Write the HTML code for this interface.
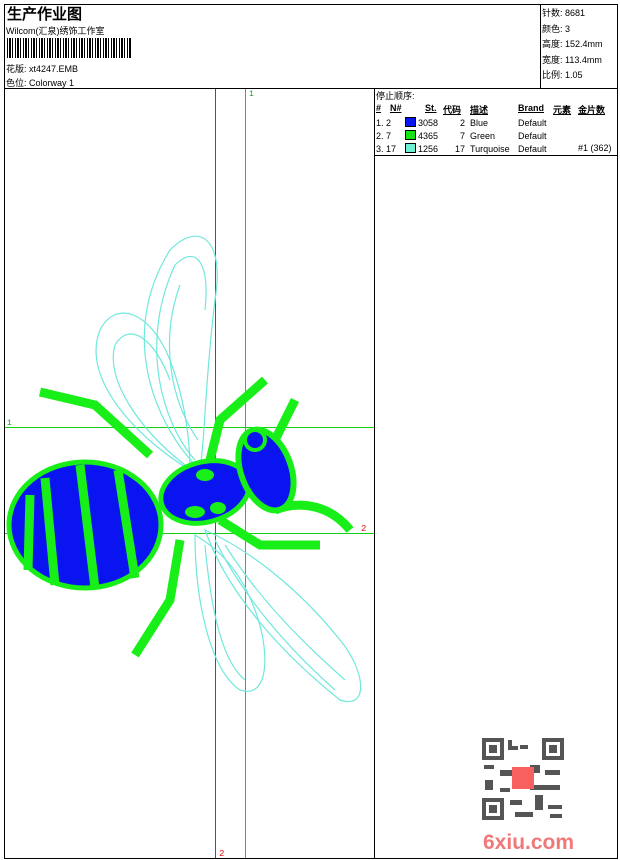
<!DOCTYPE html>
<html><head><meta charset="utf-8"><style>
body{margin:0;width:620px;height:860px;background:#fff;position:relative;font-family:"Liberation Sans","WenQuanYi Zen Hei",sans-serif;overflow:hidden}
.a{position:absolute;font-size:9px;color:#000;white-space:nowrap}
.l{position:absolute;background:#000}
</style></head><body>
<div class="l" style="left:4px;top:4px;width:614px;height:1px"></div>
<div class="l" style="left:4px;top:858px;width:614px;height:1px"></div>
<div class="l" style="left:4px;top:4px;width:1px;height:855px"></div>
<div class="l" style="left:617px;top:4px;width:1px;height:855px"></div>
<div class="l" style="left:4px;top:88px;width:614px;height:1px"></div>
<div class="l" style="left:540px;top:4px;width:1px;height:84px"></div>
<div class="l" style="left:374px;top:88px;width:1px;height:771px"></div>
<div class="l" style="left:374px;top:155px;width:244px;height:1px"></div>
<div class="a" style="left:7px;top:3px;font-size:15px;font-weight:bold">生产作业图</div>
<div class="a" style="left:6px;top:24px">Wilcom(汇泉)绣饰工作室</div>
<div style="position:absolute;left:7px;top:38px;width:124px;height:20px;background:repeating-linear-gradient(90deg,#000 0 1px,#fff 1px 2px,#000 2px 4px,#fff 4px 5px,#000 5px 6px,#fff 6px 8px)"></div>
<div class="a" style="left:6px;top:62px">花版: xt4247.EMB</div>
<div class="a" style="left:6px;top:76px">色位: Colorway 1</div>
<div class="a" style="left:542px;top:6px;line-height:15.5px">针数: 8681<br>颜色: 3<br>高度: 152.4mm<br>宽度: 113.4mm<br>比例: 1.05</div>
<div class="a" style="left:376px;top:89px">停止顺序:</div>
<div class="a" style="left:376px;top:103px;font-weight:bold;text-decoration:underline">#</div>
<div class="a" style="left:390px;top:103px;font-weight:bold;text-decoration:underline">N#</div>
<div class="a" style="left:425px;top:103px;font-weight:bold;text-decoration:underline">St.</div>
<div class="a" style="left:443px;top:103px;font-weight:bold;text-decoration:underline">代码</div>
<div class="a" style="left:470px;top:103px;font-weight:bold;text-decoration:underline">描述</div>
<div class="a" style="left:518px;top:103px;font-weight:bold;text-decoration:underline">Brand</div>
<div class="a" style="left:553px;top:103px;font-weight:bold;text-decoration:underline">元素</div>
<div class="a" style="left:578px;top:103px;font-weight:bold;text-decoration:underline">金片数</div>
<div class="a" style="left:376px;top:117px;line-height:13px">1. 2<br>2. 7<br>3. 17</div>
<div style="position:absolute;left:405px;top:117px;width:9px;height:8px;background:#0a14f0;border:1px solid #000"></div>
<div style="position:absolute;left:405px;top:130px;width:9px;height:8px;background:#14e614;border:1px solid #000"></div>
<div style="position:absolute;left:405px;top:143px;width:9px;height:8px;background:#6ef0d2;border:1px solid #000"></div>
<div class="a" style="left:418px;top:117px;line-height:13px">3058<br>4365<br>1256</div>
<div class="a" style="left:452px;top:117px;line-height:13px;text-align:right;width:13px">2<br>7<br>17</div>
<div class="a" style="left:470px;top:117px;line-height:13px">Blue<br>Green<br>Turquoise</div>
<div class="a" style="left:518px;top:117px;line-height:13px">Default<br>Default<br>Default</div>
<div class="a" style="left:578px;top:143px">#1 (362)</div>
<svg style="position:absolute;left:0;top:0" width="620" height="860">
<g shape-rendering="crispEdges">
<rect x="215" y="89" width="1" height="769" fill="#3050c0"/>
<rect x="245" y="89" width="1" height="769" fill="#10d010"/>
<rect x="5" y="427" width="369" height="1" fill="#10d010"/>
<rect x="5" y="533" width="369" height="1" fill="#10d010"/>
</g>
<text x="249" y="96" font-size="8" fill="#10a010" font-family="Liberation Mono">1</text>
<text x="7" y="425" font-size="8" fill="#10a010" font-family="Liberation Mono">1</text>
<text x="361" y="531" font-size="9" fill="#e01010" font-family="Liberation Mono">2</text>
<text x="219" y="856" font-size="9" fill="#e01010" font-family="Liberation Mono">2</text>
<g fill="none" stroke="#70e8dc" stroke-width="1.2">
<path d="M200 470 C150 420 120 330 170 250 C200 220 225 240 215 300 C205 380 205 440 200 470Z"/>
<path d="M195 460 C160 420 140 340 175 265 C195 245 210 260 205 310"/>
<path d="M198 440 C170 400 160 340 180 285"/>
<path d="M190 470 C140 440 80 380 100 330 C115 300 150 310 170 360 C185 400 190 440 190 470Z"/>
<path d="M185 465 C140 430 105 380 115 345 C130 320 155 340 170 380"/>
<path d="M205 530 C230 600 290 660 340 700 C370 710 365 670 340 640 C300 590 250 550 205 530Z"/>
<path d="M215 540 C245 600 290 650 335 690"/>
<path d="M225 545 C260 600 300 640 345 680"/>
<path d="M195 535 C195 600 210 670 240 690 C270 700 270 650 255 610 C240 570 220 550 195 535Z"/>
<path d="M205 545 C210 600 220 660 245 680"/>
</g>
<g fill="none" stroke="#18ee18" stroke-width="9" stroke-linecap="butt">
<path d="M40 392 L95 405 L150 455"/>
<path d="M180 540 L170 600 L135 655"/>
<path d="M210 460 L220 420 L265 380"/>
<path d="M275 440 L295 400"/>
<path d="M275 510 C300 500 330 505 350 530"/>
<path d="M220 520 L260 545 L320 545"/>
</g>
<ellipse cx="85" cy="525" rx="76" ry="63" fill="#0a14f0" stroke="#18ee18" stroke-width="5"/>
<g stroke="#18ee18" stroke-width="9" fill="none">
<path d="M45 478 L55 585"/><path d="M80 465 L95 588"/><path d="M118 470 L135 578"/><path d="M30 495 L28 570"/>
</g>
<ellipse cx="205" cy="492" rx="45" ry="30" fill="#0a14f0" stroke="#18ee18" stroke-width="5" transform="rotate(-15 205 492)"/>
<ellipse cx="195" cy="512" rx="10" ry="6" fill="#18ee18"/><ellipse cx="218" cy="508" rx="8" ry="6" fill="#18ee18"/>
<ellipse cx="205" cy="475" rx="9" ry="6" fill="#18ee18"/>
<ellipse cx="266" cy="470" rx="25" ry="42" fill="#0a14f0" stroke="#18ee18" stroke-width="6" transform="rotate(-20 266 470)"/>
<ellipse cx="255" cy="440" rx="10" ry="10" fill="#0a14f0" stroke="#18ee18" stroke-width="4"/>
<rect x="482" y="738" width="82" height="82" fill="#fff"/>
<g fill="#555"><rect x="482" y="738" width="22" height="22"/><rect x="542" y="738" width="22" height="22"/><rect x="482" y="798" width="22" height="22"/></g>
<g fill="#fff"><rect x="486" y="742" width="14" height="14"/><rect x="546" y="742" width="14" height="14"/><rect x="486" y="802" width="14" height="14"/></g>
<g fill="#555"><rect x="489" y="745" width="8" height="8"/><rect x="549" y="745" width="8" height="8"/><rect x="489" y="805" width="8" height="8"/></g>
<path d="M508 740h4v6h6v4h-10zM520 745h8v4h-8zM484 765h10v4h-10zM500 770h12v6h-12zM530 765h10v8h-10zM545 770h15v5h-15zM485 780h8v10h-8zM530 785h30v5h-30zM510 800h12v5h-12zM535 795h8v15h-8zM548 805h14v4h-14zM515 812h18v5h-18zM550 814h12v4h-12zM500 788h10v4h-10z" fill="#555"/>
<rect x="512" y="767" width="22" height="22" fill="#f86060"/>
<text x="483" y="849" font-size="21" font-weight="bold" fill="#f07878" font-family="Liberation Sans">6xiu.com</text>
</svg>
</body></html>
